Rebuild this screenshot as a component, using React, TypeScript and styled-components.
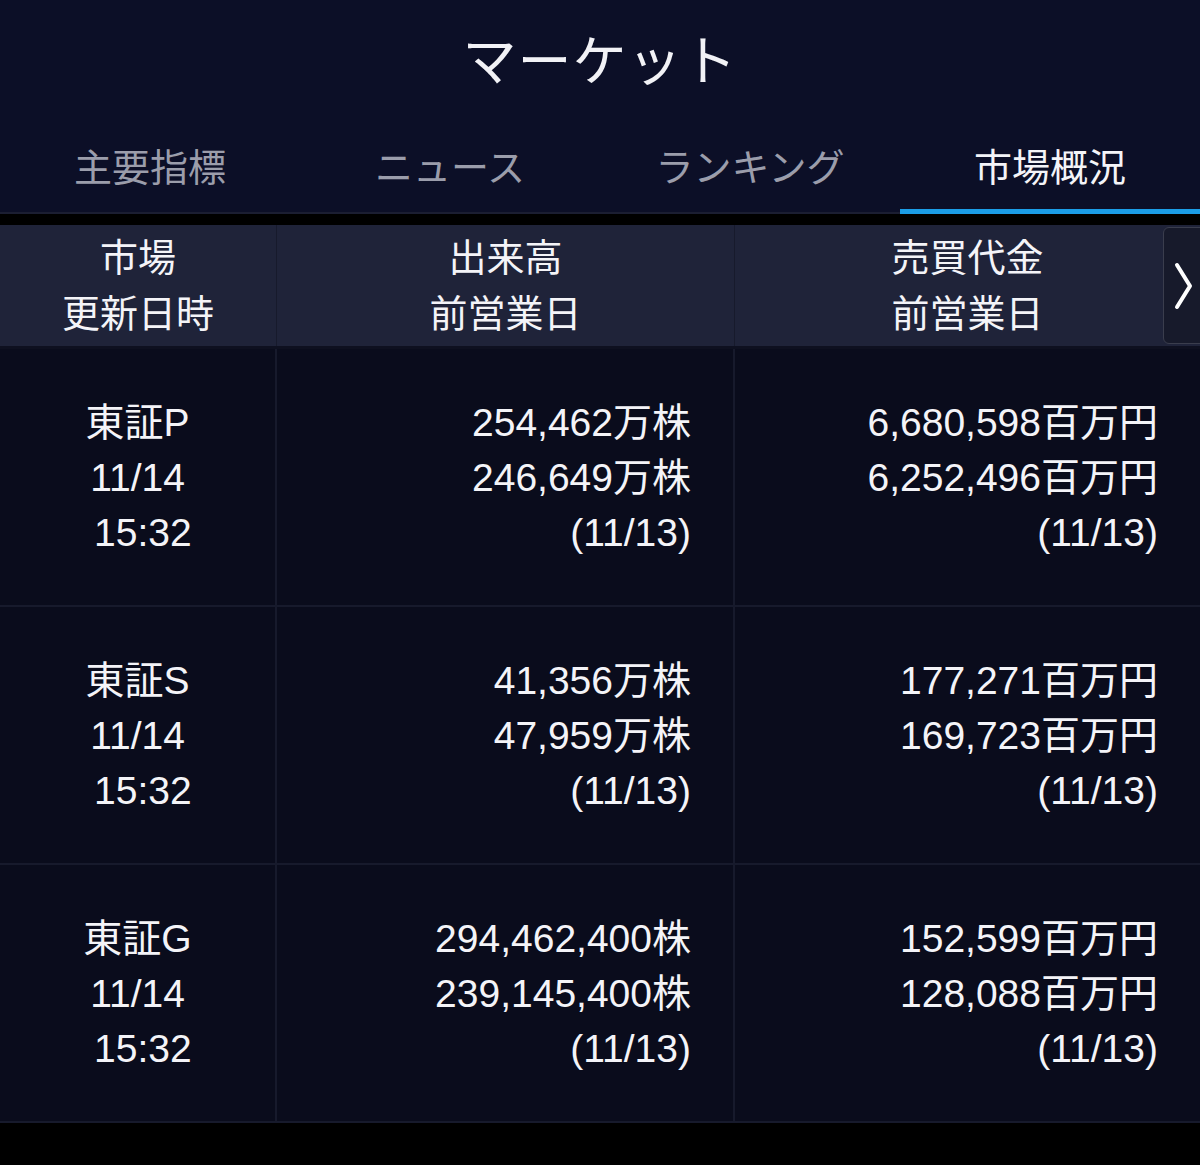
import { createGlobalStyle, styled } from "styled-components";

const GlobalStyle = createGlobalStyle`
    html, body {
        margin: 0;
        padding: 0;
        background: #000;
    }
    body {
        font-family: "Liberation Sans", "Noto Sans CJK JP", sans-serif;
        color: #fff;
    }
`;

const Page = styled.div`
    width: 1200px;
    height: 1165px;
    background: #000;
    overflow: hidden;
`;

const TopBar = styled.div`
    background: #0c0f27;
    border-bottom: 2px solid #1b1e32;
`;

const Title = styled.h1`
    margin: 0;
    height: 120px;
    box-sizing: border-box;
    padding-bottom: 6px;
    display: flex;
    align-items: center;
    justify-content: center;
    font-family: "Noto Sans CJK JP", sans-serif;
    font-weight: 400;
    font-size: 54px;
    letter-spacing: 1px;
    color: #f2f2f6;
`;

const Tabs = styled.div`
    display: grid;
    grid-template-columns: repeat(4, 1fr);
    height: 92px;
`;

const Tab = styled.div<{ $active?: boolean }>`
    display: flex;
    align-items: center;
    justify-content: center;
    font-family: "Noto Sans CJK JP", sans-serif;
    font-size: 38px;
    color: ${(p) => (p.$active ? "#f4f4f8" : "#9b9dab")};
    border-bottom: 5px solid ${(p) => (p.$active ? "#1b9de6" : "transparent")};
    margin-bottom: -2px;
`;

const Table = styled.div`
    margin-top: 11px;
`;

const HeadRow = styled.div`
    position: relative;
    display: grid;
    grid-template-columns: 277px 458px 1fr;
    height: 121px;
    background: #1f2339;
    border-bottom: 3px solid #0e1020;
`;

const HeadCell = styled.div<{ $last?: boolean }>`
    display: flex;
    flex-direction: column;
    align-items: center;
    justify-content: center;
    padding-bottom: 6px;
    font-family: "Noto Sans CJK JP", sans-serif;
    font-size: 38px;
    line-height: 56px;
    color: #f4f4f8;
    border-right: ${(p) => (p.$last ? "none" : "1px solid #171a2c")};
`;

const NextButton = styled.div`
    position: absolute;
    top: 2px;
    right: -8px;
    width: 45px;
    height: 117px;
    box-sizing: border-box;
    background: #171a2b;
    border: 1px solid #3a3d4d;
    border-radius: 6px;
    display: flex;
    align-items: center;
    padding-left: 9px;
`;

const Row = styled.div`
    display: grid;
    grid-template-columns: 277px 458px 1fr;
    height: 256px;
    background: #0a0c1c;
    border-bottom: 2px solid #171a2c;
`;

const Cell = styled.div<{ $align: "center" | "right"; $last?: boolean }>`
    display: flex;
    flex-direction: column;
    justify-content: center;
    align-items: ${(p) => (p.$align === "center" ? "center" : "flex-end")};
    padding-right: ${(p) => (p.$align === "right" ? "42px" : "0")};
    font-size: 39px;
    line-height: 55px;
    color: #f4f4f8;
    border-right: ${(p) => (p.$last ? "none" : "2px solid #171a2c")};
    white-space: pre;
`;

const rows = [
    {
        market: "東証P",
        volume: ["254,462万株", "246,649万株"],
        value: ["6,680,598百万円", "6,252,496百万円"],
    },
    {
        market: "東証S",
        volume: ["41,356万株", "47,959万株"],
        value: ["177,271百万円", "169,723百万円"],
    },
    {
        market: "東証G",
        volume: ["294,462,400株", "239,145,400株"],
        value: ["152,599百万円", "128,088百万円"],
    },
];

export default function App() {
    return (
        <Page>
            <GlobalStyle />
            <TopBar>
                <Title>マーケット</Title>
                <Tabs>
                    <Tab>主要指標</Tab>
                    <Tab>ニュース</Tab>
                    <Tab>ランキング</Tab>
                    <Tab $active>市場概況</Tab>
                </Tabs>
            </TopBar>
            <Table>
                <HeadRow>
                    <HeadCell>
                        <span>市場</span>
                        <span>更新日時</span>
                    </HeadCell>
                    <HeadCell>
                        <span>出来高</span>
                        <span>前営業日</span>
                    </HeadCell>
                    <HeadCell $last>
                        <span>売買代金</span>
                        <span>前営業日</span>
                    </HeadCell>
                    <NextButton>
                        <svg width="22" height="50" viewBox="0 0 22 50">
                            <path d="M4 4 L17 25 L4 46" fill="none" stroke="#fff" strokeWidth="4" strokeLinecap="round" strokeLinejoin="round" />
                        </svg>
                    </NextButton>
                </HeadRow>
                {rows.map((r) => (
                    <Row key={r.market}>
                        <Cell $align="center">
                            <span>{r.market}</span>
                            <span>11/14</span>
                            <span>{" 15:32"}</span>
                        </Cell>
                        <Cell $align="right">
                            <span>{r.volume[0]}</span>
                            <span>{r.volume[1]}</span>
                            <span>(11/13)</span>
                        </Cell>
                        <Cell $align="right" $last>
                            <span>{r.value[0]}</span>
                            <span>{r.value[1]}</span>
                            <span>(11/13)</span>
                        </Cell>
                    </Row>
                ))}
            </Table>
        </Page>
    );
}
